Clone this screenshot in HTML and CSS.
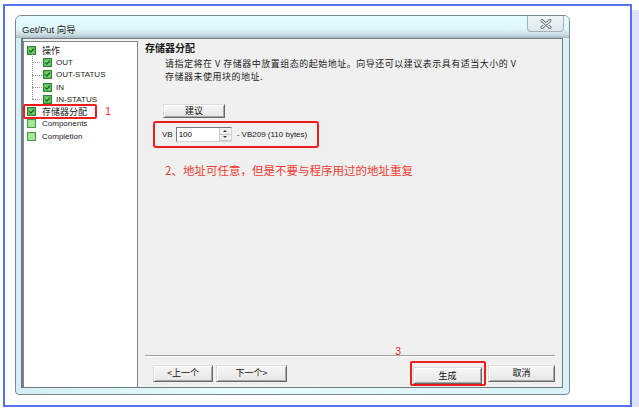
FILE: index.html
```html
<!DOCTYPE html>
<html lang="zh-CN">
<head>
    <meta charset="UTF-8">
    <title>Get/Put 向导</title>
    <link rel="stylesheet" href="styles.css">
</head>
<body>
    <svg class="defs" width="0" height="0">
        <symbol id="cb-on" viewBox="0 0 9 9">
            <rect x="0.5" y="0.5" width="8" height="8" fill="#49b749" stroke="#3a7d3a"/>
            <rect x="1.5" y="1.5" width="6" height="6" fill="#6fd06a"/>
            <path d="M2.2 4.4 L3.9 6.1 L6.9 2.8" fill="none" stroke="#1f5f1f" stroke-width="1.3"/>
        </symbol>
        <symbol id="cb-off" viewBox="0 0 9 9">
            <rect x="0.5" y="0.5" width="8" height="8" fill="#8fdc85" stroke="#4a9a48"/>
            <rect x="1.5" y="1.5" width="6" height="6" fill="#a8e89e"/>
        </symbol>
    </svg>

    <div class="sheet">
        <div class="window">
            <div class="titlebar">
                <span class="title">Get/Put 向导</span>
                <span class="close">
                    <svg width="14" height="10" viewBox="0 0 14 10">
                        <path d="M3 1.5 L11 8.5 M11 1.5 L3 8.5" stroke="#6d7378" stroke-width="3" stroke-linecap="round"/>
                        <path d="M3 1.5 L11 8.5 M11 1.5 L3 8.5" stroke="#f2f4f5" stroke-width="1.2" stroke-linecap="round"/>
                    </svg>
                </span>
            </div>
            <div class="client">
                <div class="tree">
                    <div class="node"><svg class="cb"><use href="#cb-on"/></svg><span class="cjk">操作</span></div>
                    <div class="group">
                        <div class="node child"><svg class="cb"><use href="#cb-on"/></svg><span>OUT</span></div>
                        <div class="node child"><svg class="cb"><use href="#cb-on"/></svg><span>OUT-STATUS</span></div>
                        <div class="node child"><svg class="cb"><use href="#cb-on"/></svg><span>IN</span></div>
                        <div class="node child"><svg class="cb"><use href="#cb-on"/></svg><span>IN-STATUS</span></div>
                    </div>
                    <div class="node current">
                        <svg class="cb"><use href="#cb-on"/></svg><span class="cjk">存储器分配</span>
                        <span class="mark mark-1"></span>
                        <span class="note note-1">1</span>
                    </div>
                    <div class="node"><svg class="cb"><use href="#cb-off"/></svg><span>Components</span></div>
                    <div class="node"><svg class="cb"><use href="#cb-off"/></svg><span>Completion</span></div>
                </div>

                <div class="pane">
                    <h2>存储器分配</h2>
                    <p class="desc">请指定将在 V 存储器中放置组态的起始地址。向导还可以建议表示具有适当大小的 V<br>存储器未使用块的地址.</p>
                    <button class="btn btn-suggest">建议</button>
                    <div class="addr-row">
                        <span>VB</span>
                        <span class="spin">
                            <input type="text" value="100">
                            <span class="arrows"><i class="up"></i><i class="down"></i></span>
                        </span>
                        <span>- VB209 (110 bytes)</span>
                    </div>
                    <p class="hint">2、地址可任意，但是不要与程序用过的地址重复</p>

                    <div class="footer">
                        <div class="sep"></div>
                        <div class="buttons">
                            <button class="btn btn-prev">&lt;上一个</button>
                            <button class="btn btn-next">下一个&gt;</button>
                            <span class="gen">
                                <span class="note note-3">3</span>
                                <span class="mark mark-3"></span>
                                <button class="btn btn-gen">生成</button>
                            </span>
                            <button class="btn btn-cancel">取消</button>
                        </div>
                    </div>
                </div>
            </div>
        </div>
    </div>
</body>
</html>
```

FILE: styles.css
```css
body {
    margin: 0;
    background: #fff;
    font-family: "Liberation Sans", "Noto Sans CJK SC", sans-serif;
    color: #1b1b1b;
}
.defs {
    position: absolute;
    width: 0;
    height: 0;
}
.sheet {
    margin: 4px 0 0 3px;
    border: 2px solid #5672f2;
    box-shadow: 7px 6px 0 #dde3fb;
    padding: 9px 0 0 10px;
    width: 615px;
    height: 390px;
    background: #fff;
}
.window {
    width: 553px;
    height: 378px;
    border: 1px solid #7d8990;
    border-radius: 6px 6px 4px 4px;
    background: linear-gradient(90deg, #d3eef4, #e6fbfd 40%, #d9f2f7);
    display: flex;
    flex-direction: column;
}
.titlebar {
    height: 22px;
    display: flex;
    align-items: flex-start;
    background: linear-gradient(#e3fcff, #dff6fa 60%, #c6d6dd 88%, #a6b6bf);
    border-radius: 5px 5px 0 0;
}
.title {
    font-size: 9.5px;
    margin: 6px 0 0 6px;
    color: #222;
}
.close {
    margin-left: auto;
    margin-right: 5px;
    width: 35px;
    height: 15px;
    border: 1px solid #a3b0b6;
    border-top: none;
    border-radius: 0 0 4px 4px;
    background: linear-gradient(#eef8fa, #dbe8ec);
    display: flex;
    justify-content: center;
    align-items: center;
}
.client {
    flex: 1;
    margin: 0 6px 6px 5px;
    display: flex;
    background: #f0f0f0;
    border: 1px solid #6f7a81;
    border-left-width: 2px;
}
.tree {
    position: relative;
    width: 110px;
    margin-top: 2px;
    background: #fff;
    border: 1px solid #828790;
    border-bottom: none;
    padding: 2px 0 0 3px;
    font-size: 8px;
}
.node {
    position: relative;
    height: 12.3px;
    display: flex;
    align-items: center;
    gap: 6px;
    white-space: nowrap;
}
.node .cjk {
    font-size: 9px;
}
.cb {
    width: 9px;
    height: 9px;
    flex: none;
}
.group {
    position: relative;
    padding-left: 16px;
}
.group::before {
    content: "";
    position: absolute;
    left: 5px;
    top: -2px;
    bottom: 6px;
    border-left: 1px dotted #9a9a9a;
}
.child::before {
    content: "";
    position: absolute;
    left: -11px;
    width: 10px;
    top: 6px;
    border-top: 1px dotted #9a9a9a;
}
.child {
    gap: 4px;
}
.mark {
    position: absolute;
    border: 2px solid #ee1c1c;
    border-radius: 2px;
}
.mark-1 {
    left: -4px;
    top: -1px;
    width: 70px;
    height: 11px;
}
.note {
    position: absolute;
    color: #f0332c;
    font-size: 11px;
}
.note-1 {
    left: 78px;
    top: 0;
}
.pane {
    flex: 1;
    display: flex;
    flex-direction: column;
    align-items: flex-start;
    padding: 3px 7px 3px 7px;
}
h2 {
    margin: 0;
    font-size: 10px;
    line-height: 12px;
    font-weight: bold;
    font-family: "Noto Sans CJK SC", sans-serif;
}
.desc {
    margin: 3px 0 0 20px;
    font-size: 9px;
    line-height: 13.1px;
    letter-spacing: 0.5px;
    font-family: "Noto Sans CJK SC", sans-serif;
}
.btn {
    font-family: "Noto Sans CJK SC", sans-serif;
    font-size: 9px;
    line-height: 12px;
    padding: 0;
    color: #111;
    background: linear-gradient(#f6f6f6, #e6e6e6);
    border: 1px solid;
    border-color: #dcdcdc #686868 #686868 #dcdcdc;
    box-shadow: inset 1px 1px 0 #fff, inset -1px -1px 0 #a8a8a8;
}
.btn-suggest {
    margin: 21px 0 0 18px;
    width: 62px;
    height: 14px;
}
.addr-row {
    margin: 3px 0 0 8px;
    width: 155px;
    height: 23px;
    border: 2px solid #ee1c1c;
    border-radius: 3px;
    display: flex;
    align-items: center;
    padding-left: 7px;
    gap: 3px;
    font-size: 8px;
}
.spin {
    display: flex;
    width: 56px;
    height: 15px;
    border: 1px solid #8d8d8d;
    border-color: #7a7a7a #d5d5d5 #d5d5d5 #7a7a7a;
    background: #fff;
    box-sizing: border-box;
    margin-right: 2px;
}
.spin input {
    width: 0;
    flex: 1;
    border: none;
    padding: 0 0 0 2px;
    font: 8px "Liberation Sans", sans-serif;
    outline: none;
}
.arrows {
    width: 11px;
    display: flex;
    flex-direction: column;
    border-left: 1px solid #c8c8c8;
    background: #f0f0f0;
}
.arrows i {
    flex: 1;
    display: flex;
    justify-content: center;
    align-items: center;
    border-bottom: 1px solid #c8c8c8;
}
.arrows i::after {
    content: "";
    border-left: 2px solid transparent;
    border-right: 2px solid transparent;
}
.arrows .up::after {
    border-bottom: 2px solid #333;
}
.arrows .down::after {
    border-top: 2px solid #333;
}
.hint {
    margin: 14px 0 0 20px;
    font-family: "Noto Sans CJK SC", sans-serif;
    font-size: 11.5px;
    line-height: 16px;
    color: #f03a30;
}
.footer {
    margin-top: auto;
    width: 100%;
}
.sep {
    border-top: 1px solid #a0a0a0;
    border-bottom: 1px solid #fff;
}
.buttons {
    display: flex;
    align-items: flex-start;
    margin-top: 8px;
    padding-left: 8px;
}
.buttons .btn {
    height: 17px;
}
.btn-prev {
    width: 60px;
}
.btn-next {
    width: 71px;
    margin-left: 3px;
}
.gen {
    position: relative;
    margin-left: auto;
}
.btn-gen {
    width: 69px;
}
.btn-cancel {
    width: 67px;
    margin-left: 6px;
}
.mark-3 {
    left: -3px;
    top: -4px;
    width: 72px;
    height: 21px;
}
.note-3 {
    left: -18px;
    top: -20px;
}
```
